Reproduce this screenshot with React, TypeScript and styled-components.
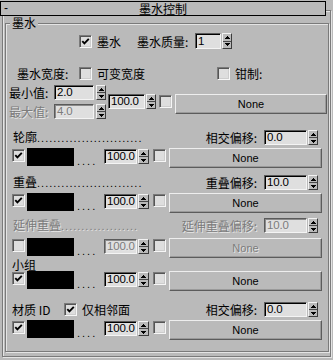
import React from "react";
import styled, { createGlobalStyle, css } from "styled-components";

const BG = "#bababa";
const CJK = `"Noto Sans CJK SC", "Liberation Sans", sans-serif`;
const SANS = `"Liberation Sans", Arial, sans-serif`;
const DIS = css`
  color: #7c7c7c;
  text-shadow: 1px 1px 0 #e6e6e6;
`;

const Global = createGlobalStyle`
  html, body { margin: 0; padding: 0; background: ${BG}; }
  body { font-family: ${CJK}; font-size: 12px; color: #000; }
  * { box-sizing: border-box; }
`;

const Panel = styled.div`
  width: 333px;
  height: 360px;
  padding-top: 1px;
  overflow: hidden;
  background: ${BG};
`;

const Header = styled.div`
  position: relative;
  z-index: 1;
  width: 326px;
  height: 15px;
  border: 1px solid #000;
  background: ${BG};
  display: grid;
  grid-template-columns: 14px 1fr 14px;
  align-items: center;
  line-height: 13px;
`;

const Toggle = styled.span`
  padding-left: 3px;
  font-family: ${SANS};
  font-size: 12px;
`;

const Title = styled.span`
  text-align: center;
  font-size: 12px;
`;

const Frame = styled.div`
  margin: -6px 0 0 2px;
  width: 329px;
  height: 347px;
  border: 1px solid #7a7a7a;
  box-shadow: inset 1px 1px 0 #e4e4e4, 1px 1px 0 #e4e4e4;
  padding: 6px 0 0 2px;
`;

const Group = styled.fieldset`
  margin: 0;
  padding: 0;
  min-width: 0;
  width: 324px;
  height: 335px;
  border: 1px solid #7a7a7a;
  box-shadow: inset 1px 1px 0 #e4e4e4, 1px 1px 0 #e4e4e4;
`;

const Legend = styled.legend`
  margin-left: 4px;
  padding: 0 2px;
  height: 12px;
  line-height: 12px;
  font-size: 12px;
  background: ${BG};
`;

const Body = styled.div`
  display: flex;
  flex-direction: column;
`;

const Row = styled.div<{ $h: number; $mt: number; $pl: number; $top?: boolean }>`
  display: flex;
  align-items: ${(p) => (p.$top ? "flex-start" : "center")};
  height: ${(p) => p.$h}px;
  margin-top: ${(p) => p.$mt}px;
  padding-left: ${(p) => p.$pl}px;
  padding-right: 10px;
  flex: none;
`;

const Label = styled.span<{ $w?: number; $ml?: number; $disabled?: boolean }>`
  flex: none;
  white-space: nowrap;
  line-height: 15px;
  ${(p) => p.$w !== undefined && css`width: ${p.$w}px;`}
  margin-left: ${(p) => p.$ml ?? 0}px;
  ${(p) => p.$disabled && DIS}
`;

const Spacer = styled.span`
  flex: 1;
`;

const SectionTitle = styled.span<{ $disabled?: boolean }>`
  flex: none;
  white-space: nowrap;
  line-height: 15px;
  ${(p) => p.$disabled && DIS}
`;

const Leader = styled.span`
  font-family: ${SANS};
  font-size: 11px;
  letter-spacing: 1px;
`;

const Dots = styled.span`
  flex: none;
  width: 27px;
  margin-left: 3px;
  align-self: flex-end;
  line-height: 14px;
  font-family: ${SANS};
  font-size: 11px;
  letter-spacing: 2px;
`;

const Field = styled.div<{ $w: number; $h: number; $ml?: number; $mt?: number; $disabled?: boolean }>`
  flex: none;
  width: ${(p) => p.$w}px;
  height: ${(p) => p.$h}px;
  margin-left: ${(p) => p.$ml ?? 0}px;
  margin-top: ${(p) => p.$mt ?? 0}px;
  padding-left: 2px;
  background: #dfdfdf;
  border: 1px solid;
  border-color: #5a5a5a #f4f4f4 #f4f4f4 #5a5a5a;
  box-shadow: inset 1px 1px 0 ${(p) => (p.$disabled ? "#8a8a8a" : "#000")};
  font-family: ${SANS};
  font-size: 11.5px;
  letter-spacing: -0.2px;
  line-height: ${(p) => p.$h - 2}px;
  white-space: nowrap;
  ${(p) => p.$disabled && DIS}
`;

const SpinBox = styled.div<{ $w: number; $h: number; $ml?: number; $mt?: number }>`
  flex: none;
  display: flex;
  flex-direction: column;
  width: ${(p) => p.$w}px;
  height: ${(p) => p.$h}px;
  margin-left: ${(p) => p.$ml ?? 0}px;
  margin-top: ${(p) => p.$mt ?? 0}px;
  border: 1px solid;
  border-color: #f2f2f2 #3c3c3c #3c3c3c #f2f2f2;
  background: ${BG};
`;

const SpinHalf = styled.div<{ $down?: boolean }>`
  flex: 1;
  display: flex;
  align-items: center;
  justify-content: center;
  ${(p) => p.$down && css`border-top: 1px solid #4a4a4a;`}
`;

const CheckBox = styled.span<{ $ml?: number; $mt?: number }>`
  flex: none;
  display: flex;
  align-items: center;
  justify-content: center;
  width: 13px;
  height: 13px;
  margin-left: ${(p) => p.$ml ?? 0}px;
  margin-top: ${(p) => p.$mt ?? 0}px;
  background: #dedede;
  border: 1px solid;
  border-color: #7a7a7a #f6f6f6 #f6f6f6 #7a7a7a;
  box-shadow: inset 1px 1px 0 #555, inset -1px -1px 0 #cdcdcd;
`;

const Swatch = styled.div`
  flex: none;
  width: 47px;
  height: 18px;
  margin-left: 2px;
  background: #000;
`;

const MapButton = styled.div<{ $w: number; $ml: number; $disabled?: boolean }>`
  flex: none;
  display: flex;
  align-items: center;
  justify-content: center;
  width: ${(p) => p.$w}px;
  height: 20px;
  margin-left: ${(p) => p.$ml}px;
  border: 1px solid;
  border-color: #eeeeee #5c5c5c #5c5c5c #eeeeee;
  box-shadow: inset -1px -1px 0 #9a9a9a;
  font-family: ${SANS};
  font-size: 11px;
  ${(p) => p.$disabled && DIS}
`;

const LeftColumn = styled.div`
  display: flex;
  flex-direction: column;
  gap: 4px;
  flex: none;
`;

const SubRow = styled.div`
  display: flex;
  align-items: center;
  height: 15px;
`;

const RightCluster = styled.div`
  display: flex;
  align-items: flex-start;
  margin-top: 9px;
`;

function Spinner(p: { w?: number; h: number; ml?: number; mt?: number }) {
  return (
    <SpinBox $w={p.w ?? 10} $h={p.h} $ml={p.ml} $mt={p.mt}>
      <SpinHalf>
        <svg width="5" height="3" shapeRendering="crispEdges">
          <path d="M2 0h1v1h-1zM1 1h3v1h-3zM0 2h5v1h-5z" fill="#000" />
        </svg>
      </SpinHalf>
      <SpinHalf $down>
        <svg width="5" height="3" shapeRendering="crispEdges">
          <path d="M0 0h5v1h-5zM1 1h3v1h-3zM2 2h1v1h-1z" fill="#000" />
        </svg>
      </SpinHalf>
    </SpinBox>
  );
}

function Check(p: { checked?: boolean; ml?: number; mt?: number }) {
  return (
    <CheckBox $ml={p.ml} $mt={p.mt}>
      {p.checked && (
        <svg width="9" height="9" viewBox="0 0 9 9">
          <path d="M1.3 4.2 L3.4 6.4 L7.8 1.8" stroke="#000" strokeWidth="1.9" fill="none" />
        </svg>
      )}
    </CheckBox>
  );
}

function SectionHead(p: {
  title: string;
  dots: number;
  right: string;
  value: string;
  mt: number;
  disabled?: boolean;
}) {
  return (
    <Row $h={15} $mt={p.mt} $pl={7}>
      <SectionTitle $disabled={p.disabled}>
        {p.title}
        <Leader>{".".repeat(p.dots)}</Leader>
      </SectionTitle>
      <Spacer />
      <Label $disabled={p.disabled}>{p.right}</Label>
      <Field $w={43} $h={15} $ml={7} $disabled={p.disabled}>
        {p.value}
      </Field>
      <Spinner h={15} ml={1} />
    </Row>
  );
}

function Channel(p: { mt: number; checked?: boolean; disabled?: boolean }) {
  return (
    <Row $h={20} $mt={p.mt} $pl={6} $top>
      <Check checked={p.checked} mt={1} />
      <Swatch />
      <Dots>....</Dots>
      <Field $w={33} $h={15} $mt={1} $disabled={p.disabled}>
        100.0
      </Field>
      <Spinner w={11} h={15} ml={1} mt={1} />
      <Check ml={4} mt={1} />
      <MapButton $w={153} $ml={3} $disabled={p.disabled}>
        None
      </MapButton>
    </Row>
  );
}

export default function App() {
  return (
    <>
      <Global />
      <Panel>
        <Header>
          <Toggle>-</Toggle>
          <Title>墨水控制</Title>
          <span />
        </Header>
        <Frame>
          <Group>
            <Legend>墨水</Legend>
            <Body>
              <Row $h={16} $mt={4} $pl={73}>
                <Check checked />
                <Label $ml={5}>墨水</Label>
                <Label $ml={16} $w={53}>
                  墨水质量:
                </Label>
                <Field $w={26} $h={16} $ml={5}>
                  1
                </Field>
                <Spinner h={16} ml={1} />
              </Row>

              <Row $h={15} $mt={17} $pl={11}>
                <Label $w={53}>墨水宽度:</Label>
                <Check ml={9} />
                <Label $ml={5} $w={48}>
                  可变宽度
                </Label>
                <Check ml={72} />
                <Label $ml={5}>钳制:</Label>
              </Row>

              <Row $h={34} $mt={4} $pl={3} $top>
                <LeftColumn>
                  <SubRow>
                    <Label $w={43}>最小值:</Label>
                    <Field $w={40} $h={15} $ml={2}>
                      2.0
                    </Field>
                    <Spinner h={15} ml={2} />
                  </SubRow>
                  <SubRow>
                    <Label $w={43} $disabled>
                      最大值:
                    </Label>
                    <Field $w={40} $h={15} $ml={2} $disabled>
                      4.0
                    </Field>
                    <Spinner h={15} ml={2} />
                  </SubRow>
                </LeftColumn>
                <RightCluster>
                  <Field $w={37} $h={15} $ml={2}>
                    100.0
                  </Field>
                  <Spinner h={15} ml={1} />
                  <Check ml={3} mt={1} />
                  <MapButton $w={152} $ml={3}>
                    None
                  </MapButton>
                </RightCluster>
              </Row>

              <SectionHead mt={11} title="轮廓" dots={26} right="相交偏移:" value="0.0" />
              <Channel mt={3} checked />

              <SectionHead mt={7} title="重叠" dots={26} right="重叠偏移:" value="10.0" />
              <Channel mt={3} checked />

              <SectionHead
                mt={5}
                title="延伸重叠"
                dots={19}
                right="延伸重叠偏移:"
                value="10.0"
                disabled
              />
              <Channel mt={5} disabled />

              <Row $h={13} $mt={0} $pl={6}>
                <Label>小组</Label>
              </Row>
              <Channel mt={0} checked />

              <Row $h={17} $mt={10} $pl={6}>
                <Label $w={37}>材质 ID</Label>
                <Check checked ml={15} />
                <Label $ml={5}>仅相邻面</Label>
                <Spacer />
                <Label>相交偏移:</Label>
                <Field $w={43} $h={15} $ml={7}>
                  0.0
                </Field>
                <Spinner h={15} ml={1} />
              </Row>
              <Channel mt={2} checked />
            </Body>
          </Group>
        </Frame>
      </Panel>
    </>
  );
}
